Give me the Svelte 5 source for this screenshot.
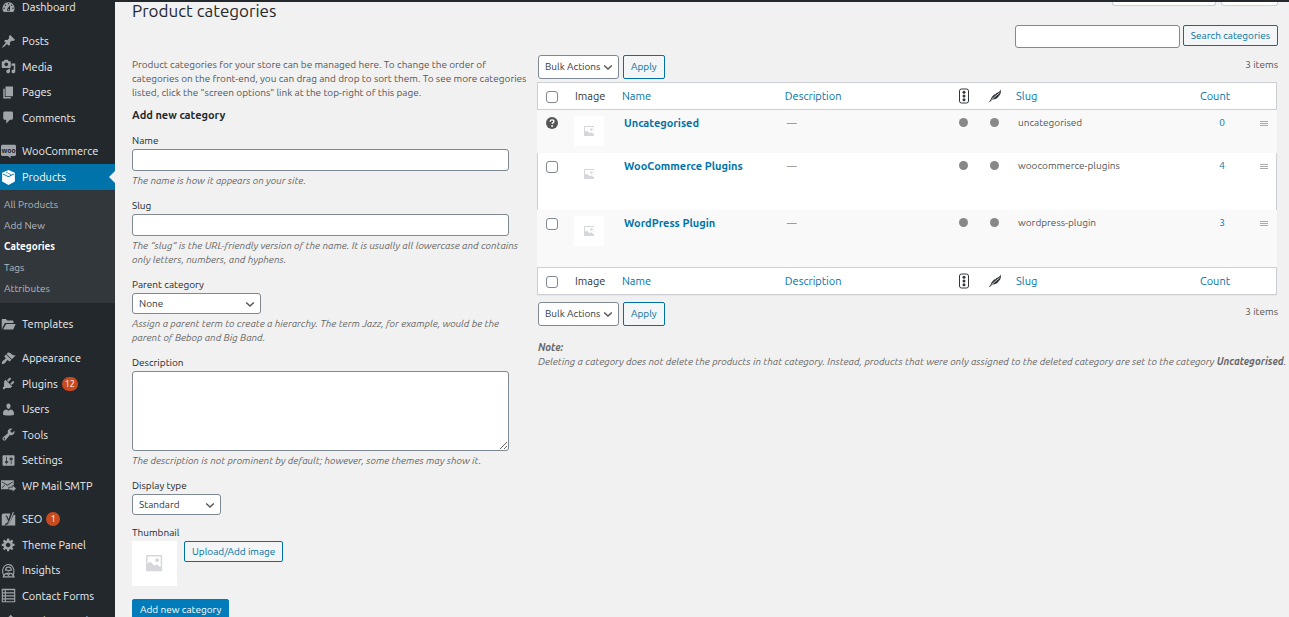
<script>
  const icons = {
    dashboard: 'M3.76 16h12.48A7.998 7.998 0 0 0 10 3a7.998 7.998 0 0 0-6.24 13zM10 4c.55 0 1 .45 1 1s-.45 1-1 1-1-.45-1-1 .45-1 1-1zM6 6c.55 0 1 .45 1 1s-.45 1-1 1-1-.45-1-1 .45-1 1-1zm8 0c.55 0 1 .45 1 1s-.45 1-1 1-1-.45-1-1 .45-1 1-1zm-5.37 5.55L12 7v6c0 1.1-.9 2-2 2s-2-.9-2-2c0-.57.24-1.08.63-1.45zM4 10c.55 0 1 .45 1 1s-.45 1-1 1-1-.45-1-1 .45-1 1-1zm12 0c.55 0 1 .45 1 1s-.45 1-1 1-1-.45-1-1 .45-1 1-1zm-5 3c0-.55-.45-1-1-1s-1 .45-1 1 .45 1 1 1 1-.45 1-1z',
    pin: 'M10.44 3.02l1.82-1.82 6.36 6.35-1.83 1.82c-1.05-.68-2.48-.57-3.41.36l-.75.75c-.92.93-1.04 2.35-.35 3.41l-1.83 1.82-2.41-2.41-2.8 2.79c-.42.42-3.38 2.71-3.8 2.29s1.86-3.39 2.28-3.81l2.79-2.79L4.1 9.36l1.83-1.82c1.05.69 2.48.57 3.4-.36l.75-.75c.93-.92 1.05-2.35.36-3.41z',
    media: 'M13 11V4c0-.55-.45-1-1-1h-1.67L9 1H5L3.67 3H2c-.55 0-1 .45-1 1v7c0 .55.45 1 1 1h10c.55 0 1-.45 1-1zM7 4.5c1.38 0 2.5 1.12 2.5 2.5S8.38 9.5 7 9.5 4.5 8.38 4.5 7 5.62 4.5 7 4.5zM14 6h5v10.5c0 1.38-1.12 2.5-2.5 2.5S14 17.88 14 16.5s1.12-2.5 2.5-2.5c.17 0 .34.02.5.05V9h-3V6zm-4 8.05V13h2v3.5c0 1.38-1.12 2.5-2.5 2.5S7 17.88 7 16.5 8.12 14 9.5 14c.17 0 .34.02.5.05z',
    page: 'M6 15V2h10v13H6zm-1 1h8v2H3V5h2v11z',
    comment: 'M5 2h9c1.1 0 2 .9 2 2v7c0 1.1-.9 2-2 2h-2l-5 5v-5H5c-1.1 0-2-.9-2-2V4c0-1.1.9-2 2-2z',
    box: 'M10 0l8.5 3.8v11.4L10 20l-8.500-4.800V3.800zM2.300 5.600l7.700 4 7.700-4-.5-.9-3 1.500-7-3.600-1 .5 6.900 3.600-3.200 1.600-7.200-3.500z',
    folder: 'M1 16.500V4c0-.8.6-1.500 1.400-1.500h4.200l1.800 2.200h7.200c.6 0 1 .4 1 1V8H6.200c-.8 0-1.400.4-1.700 1.100zM6.700 9.200H19.500l-2.700 6.600c-.2.4-.6.7-1 .7H2.800z',
    brush: 'M14.48 11.06L7.41 3.99l1.5-1.5c.5-.56 2.3-.47 3.51.32 1.21.8 1.43 1.28 2.91 2.1 1.18.64 2.45 1.26 4.45.85zm-.71.71L6.7 4.7 4.93 6.47c-.39.39-.39 1.02 0 1.41l1.06 1.06c.39.39.39 1.03 0 1.42-.6.6-1.43 1.11-2.21 1.69-.35.26-.7.53-1.01.84C1.43 14.23.4 16.08 1.4 17.07c.99 1 2.84-.03 4.18-1.36.31-.31.58-.66.85-1.02.57-.78 1.08-1.61 1.69-2.21.39-.39 1.02-.39 1.41 0l1.06 1.06c.39.39 1.02.39 1.41 0z',
    plug: 'M13.11 4.36L9.87 7.6 8 5.73l3.24-3.24c.35-.34 1.05-.2 1.56.32.52.51.66 1.21.31 1.55zm-8 1.77l.91-1.12 9.01 9.01-1.19.84c-.71.71-2.63 1.16-3.82 1.16H6.14L4.9 17.26c-.59.59-1.54.59-2.12 0-.59-.58-.59-1.53 0-2.12l1.24-1.24v-3.88c0-1.13.4-3.19 1.09-3.89zm7.26 3.97l3.24-3.24c.34-.35 1.04-.21 1.55.31.52.51.66 1.21.31 1.55l-3.24 3.25z',
    user: 'M10 9.25c-2.27 0-2.73-3.44-2.73-3.44C7 4.02 7.82 2 9.97 2c2.16 0 2.98 2.02 2.71 3.81 0 0-.41 3.44-2.68 3.44zm0 2.57L12.72 10c2.39 0 4.52 2.33 4.52 4.53v2.49s-3.65 1.13-7.24 1.13c-3.65 0-7.24-1.13-7.24-1.13v-2.49c0-2.25 1.94-4.48 4.47-4.48z',
    wrench: 'M16.68 9.77c-1.34 1.34-3.3 1.67-4.95.99l-5.41 6.52c-.99.99-2.59.99-3.58 0s-.99-2.59 0-3.57l6.52-5.42c-.68-1.65-.35-3.61.99-4.95 1.28-1.28 3.12-1.62 4.72-1.06l-2.89 2.89 2.82 2.82 2.86-2.87c.53 1.58.18 3.39-1.08 4.65zM3.81 16.21c.4.39 1.04.39 1.43 0 .4-.4.4-1.04 0-1.43-.39-.4-1.03-.4-1.43 0-.39.39-.39 1.03 0 1.43z',
    sliders: 'M18 16V4c0-.55-.45-1-1-1H3c-.55 0-1 .45-1 1v12c0 .55.45 1 1 1h14c.55 0 1-.45 1-1zM8 11h1c.55 0 1 .45 1 1s-.45 1-1 1H8v1.5c0 .28-.22.5-.5.5s-.5-.22-.5-.5V13H6c-.55 0-1-.45-1-1s.45-1 1-1h1V5.5c0-.28.22-.5.5-.5s.5.22.5.5V11zm5-2h-1c-.55 0-1-.45-1-1s.45-1 1-1h1V5.5c0-.28.22-.5.5-.5s.5.22.5.5V7h1c.55 0 1 .45 1 1s-.45 1-1 1h-1v5.5c0 .28-.22.5-.5.5s-.5-.22-.5-.5V9z',
    mail: 'M0 3h17v6.500h-2.500v2H10v3.500H0zM1.200 4.500v1l7.300 4.800 7.300-4.800v-1L8.500 9zM1.300 13.500l4-3.800-.6-.5-3.400 3.200zM11 12.500h4.500V10l4.500 4-4.500 4v-2.500H11z',
    gear: 'M18 12h-2.18c-.17.7-.44 1.35-.81 1.93l1.54 1.54-2.1 2.1-1.54-1.54c-.58.36-1.23.63-1.91.79V19H8v-2.18c-.68-.16-1.33-.43-1.91-.79l-1.54 1.54-2.12-2.12 1.54-1.54c-.36-.58-.63-1.23-.79-1.91H1V9.03h2.17c.16-.7.44-1.35.8-1.94L2.43 5.55l2.1-2.1 1.54 1.54c.58-.37 1.24-.64 1.93-.81V2h3v2.18c.68.16 1.33.43 1.91.79l1.54-1.54 2.12 2.12-1.54 1.54c.36.59.64 1.24.8 1.94H18V12zm-8.5 1.5c1.66 0 3-1.34 3-3s-1.34-3-3-3-3 1.34-3 3 1.34 3 3 3z',
    list: 'M1 1h18v18H1zM2.500 3v2.500H5V3zm4 0v2.500h11V3zm-4 4.200v2.300H5V7.200zm4 0v2.300h11V7.200zm-4 4v2.300H5v-2.300zm4 0v2.300h11v-2.300zm-4 4V17.500H5v-2.300zm4 0V17.500h11v-2.300z',
    feed: 'M13 1l4 4-2 3 2 4v6H2v-6l4-4z'
  };

  const groups = [
    [{ label: 'Dashboard', icon: 'dashboard' }],
    [
      { label: 'Posts', icon: 'pin' },
      { label: 'Media', icon: 'media' },
      { label: 'Pages', icon: 'page' },
      { label: 'Comments', icon: 'comment' }
    ],
    [
      { label: 'WooCommerce', icon: 'woo' },
      {
        label: 'Products',
        icon: 'box',
        current: true,
        sub: ['All Products', 'Add New', 'Categories', 'Tags', 'Attributes']
      }
    ],
    [{ label: 'Templates', icon: 'folder' }],
    [
      { label: 'Appearance', icon: 'brush' },
      { label: 'Plugins', icon: 'plug', count: 12 },
      { label: 'Users', icon: 'user' },
      { label: 'Tools', icon: 'wrench' },
      { label: 'Settings', icon: 'sliders' },
      { label: 'WP Mail SMTP', icon: 'mail' }
    ],
    [
      { label: 'SEO', icon: 'seo', count: 1 },
      { label: 'Theme Panel', icon: 'gear' },
      { label: 'Insights', icon: 'insights' },
      { label: 'Contact Forms', icon: 'list' },
      { label: 'Product Feed', icon: 'feed' }
    ]
  ];

  const rows = [
    { name: 'Uncategorised', slug: 'uncategorised', count: 0, fixed: true },
    { name: 'WooCommerce Plugins', slug: 'woocommerce-plugins', count: 4 },
    { name: 'WordPress Plugin', slug: 'wordpress-plugin', count: 3 }
  ];
</script>

{#snippet chevron()}
  <svg class="chevron" viewBox="0 0 10 10" aria-hidden="true"><path d="M1.200 3.400L5 7l3.800-3.600" /></svg>
{/snippet}

{#snippet placeholder()}
  <span class="placeholder">
    <svg viewBox="0 0 16 16" aria-hidden="true">
      <path fill="#d5d7db" fill-rule="evenodd" d="M1 0h14a1 1 0 0 1 1 1v14a1 1 0 0 1-1 1H1a1 1 0 0 1-1-1V1a1 1 0 0 1 1-1zm.5 1.500v7.200L4 6.500l4.500 4.200 2-1.500 4 3V1.500zM11 3.200a1.900 1.900 0 1 1 0 3.800 1.900 1.900 0 0 1 0-3.800z" />
    </svg>
  </span>
{/snippet}

{#snippet headings(pos)}
  <tr>
    <th class="cb"><input type="checkbox" aria-label="Select all, {pos}" /></th>
    <th class="image">Image</th>
    <th class="name"><a href="#name">Name</a></th>
    <th class="desc"><a href="#description">Description</a></th>
    <th class="mark">
      <svg viewBox="0 0 16 16" role="img" aria-label="SEO score">
        <rect x="3.500" y="1" width="9" height="14" rx="2" fill="none" stroke="#32373c" />
        <circle cx="8" cy="4.200" r="1.500" /><circle cx="8" cy="8" r="1.500" /><circle cx="8" cy="11.800" r="1.500" />
      </svg>
    </th>
    <th class="mark">
      <svg viewBox="0 0 16 16" role="img" aria-label="Readability score">
        <path d="M13.700 1.500c.5 2.600 0 4.600-1.200 6l-1 .4.4.3c-1.700 2.300-3.900 3.300-6.400 3.200L3 13.700l-1.300.5 2-2.600C4 9.300 6 7.100 8.200 5.900l.1.700 1.100-1.500C11.500 4.300 12.900 3.200 13.700 1.500z" />
        <path d="M4.500 11.600L12.500 4.800" stroke="#fff" stroke-width=".7" />
      </svg>
    </th>
    <th class="slug"><a href="#slug">Slug</a></th>
    <th class="num"><a href="#count">Count</a></th>
    <th class="handle"></th>
  </tr>
{/snippet}

{#snippet tablenav(pos)}
  <div class="tablenav">
    <span class="select">
      <select aria-label="Bulk actions, {pos}"><option>Bulk Actions</option></select>
      {@render chevron()}
    </span>
    <button type="button" class="button tall">Apply</button>
    <span class="items">3 items</span>
  </div>
{/snippet}

<div class="topbar"></div>
<div class="shell">
  <nav class="menu" aria-label="Main menu">
    {#each groups as group}
      <ul class="group">
        {#each group as item}
          <li>
            <a class="item" class:current={item.current} href="#{item.label}">
              <svg class="icon" viewBox="0 0 20 20" aria-hidden="true">
                {#if item.icon === 'woo'}
                  <path d="M2 1h16c1.100 0 2 .9 2 2v11c0 1.100-.9 2-2 2h-5.500l1 3-4.500-3H2c-1.100 0-2-.9-2-2V3c0-1.100.9-2 2-2z" />
                  <text x="10" y="11.500" text-anchor="middle">woo</text>
                {:else if item.icon === 'seo'}
                  <path d="M3.500 2h9L10 9.500 8.200 5H5.500l3.200 8.200c-.4 1.400-1.200 2-3 2.100v2.700H1V4.500C1 3.100 2.100 2 3.500 2zM17 3.500l2 .5V18H8.800c1.600-1 2.400-2.500 3-4z" />
                  <path d="M16.500 0L11 14.500c-.9 2.300-2 3.300-4 3.500M6 5.500l3.600 8" fill="none" stroke="currentColor" stroke-width="1.500" />
                {:else if item.icon === 'insights'}
                  <g fill="none" stroke="currentColor" stroke-width="1.500">
                    <path d="M4 17C1 13 1.500 6 5.500 3.500c3.500-2.500 8-1.500 10 1.500 2.500 3.500 2 9 0 12" />
                    <path d="M6.500 10.500c-1-3 .5-5 3.500-5s4.500 2 3.500 5M3 18.500c1-3.500 4-5 7-5s6.500 1.500 7.500 5zM7 9l3 1.500L13.500 9M8 14l2 2.500 2-2.500" />
                  </g>
                {:else}
                  <path fill-rule="evenodd" d={icons[item.icon]} />
                {/if}
              </svg>
              <span>{item.label}</span>
              {#if item.count}<span class="count">{item.count}</span>{/if}
            </a>
            {#if item.sub}
              <ul class="sub">
                {#each item.sub as label}
                  <li><a class:active={label === 'Categories'} href="#{label}">{label}</a></li>
                {/each}
              </ul>
            {/if}
          </li>
        {/each}
      </ul>
    {/each}
  </nav>

  <main>
    <div class="screen-tabs"><span class="tab wide"></span><span class="tab"></span></div>
    <h1>Product categories</h1>
    <form class="search">
      <input type="search" aria-label="Search categories" />
      <button type="button" class="button">Search categories</button>
    </form>

    <div class="columns">
      <section>
        <p class="intro">Product categories for your store can be managed here. To change the order of categories on the front-end, you can drag and drop to sort them. To see more categories listed, click the "screen options" link at the top-right of this page.</p>
        <h2>Add new category</h2>
        <form>
          <div class="field">
            <label for="name">Name</label>
            <input id="name" type="text" />
            <p class="help">The name is how it appears on your site.</p>
          </div>
          <div class="field">
            <label for="slug">Slug</label>
            <input id="slug" type="text" />
            <p class="help">The “slug” is the URL-friendly version of the name. It is usually all lowercase and contains only letters, numbers, and hyphens.</p>
          </div>
          <div class="field">
            <label for="parent">Parent category</label>
            <span class="select parent">
              <select id="parent"><option>None</option></select>
              {@render chevron()}
            </span>
            <p class="help">Assign a parent term to create a hierarchy. The term Jazz, for example, would be the parent of Bebop and Big Band.</p>
          </div>
          <div class="field">
            <label for="description">Description</label>
            <textarea id="description"></textarea>
            <p class="help">The description is not prominent by default; however, some themes may show it.</p>
          </div>
          <div class="field">
            <label for="display">Display type</label>
            <span class="select display">
              <select id="display"><option>Standard</option></select>
              {@render chevron()}
            </span>
          </div>
          <div class="field">
            <label for="upload">Thumbnail</label>
            <div class="thumb">
              {@render placeholder()}
              <button id="upload" type="button" class="button">Upload/Add image</button>
            </div>
          </div>
          <button type="button" class="button primary">Add new category</button>
        </form>
      </section>

      <section>
        {@render tablenav('top')}
        <table>
          <thead>{@render headings('top')}</thead>
          <tbody>
            {#each rows as row}
              <tr class:short={row.fixed}>
                <td class="cb">
                  {#if row.fixed}
                    <svg class="tip" viewBox="0 0 12 12" role="img" aria-label="Default category">
                      <circle cx="6" cy="6" r="6" fill="#555" />
                      <path d="M4.200 4.700C4.200 3.500 5 2.900 6 2.900s1.900.6 1.900 1.600c0 1.300-1.700 1.300-1.700 2.600" fill="none" stroke="#fff" stroke-width="1.400" />
                      <circle cx="6.100" cy="9" r=".9" fill="#fff" />
                    </svg>
                  {:else}
                    <input type="checkbox" aria-label="Select {row.name}" />
                  {/if}
                </td>
                <td class="image">{@render placeholder()}</td>
                <td class="name"><a href="#{row.slug}">{row.name}</a></td>
                <td class="desc">—</td>
                <td class="mark"><span class="dot"></span></td>
                <td class="mark"><span class="dot"></span></td>
                <td class="slug">{row.slug}</td>
                <td class="num"><a href="#{row.slug}-products">{row.count}</a></td>
                <td class="handle">
                  <svg viewBox="0 0 8 8" aria-hidden="true"><path d="M0 2.500h8M0 4.500h8M0 6.500h8" stroke="#aaa" /></svg>
                </td>
              </tr>
            {/each}
          </tbody>
          <tfoot>{@render headings('bottom')}</tfoot>
        </table>
        <div class="below">{@render tablenav('bottom')}</div>
        <p class="help note"><strong>Note:</strong><br />Deleting a category does not delete the products in that category. Instead, products that were only assigned to the deleted category are set to the category <strong>Uncategorised</strong>.</p>
      </section>
    </div>
  </main>
</div>

<style>
  :global(body) {
    background: #f1f1f1;
    overflow: hidden;
  }
  :global(#app) {
    height: 100vh;
    overflow: hidden;
    font: 10px/14px Ubuntu, "Noto Sans", sans-serif;
    color: #444;
  }
  *, *::before, *::after { box-sizing: border-box; }
  ul { list-style: none; margin: 0; padding: 0; }
  p, h1, h2 { margin: 0; }
  a { color: #0073aa; text-decoration: none; }
  input, select, textarea, button { font: inherit; margin: 0; }

  .topbar { height: 2px; background: #23282d; position: relative; z-index: 1; }
  .shell { display: grid; grid-template-columns: 115px 1fr; min-height: 100%; }

  .menu { background: #23282d; margin-top: -8px; font-size: 11px; }
  .group {
    display: grid;
    grid-auto-rows: minmax(26px, auto) minmax(25px, auto);
    margin-bottom: 8px;
  }
  .group > li { display: grid; }
  .item {
    position: relative;
    display: flex;
    align-items: center;
    padding-left: 1px;
    gap: 6px;
    color: #eee;
    white-space: nowrap;
  }
  .icon { width: 15px; height: 15px; fill: currentColor; color: #a0a5aa; flex: none; }
  .icon text { font: bold 9px "Noto Sans", sans-serif; fill: #23282d; }
  .current { height: 26px; background: #0073aa; color: #fff; }
  .current .icon { color: #fff; }
  .current::after {
    content: '';
    position: absolute;
    right: 0;
    top: 7px;
    border: 6px solid transparent;
    border-left-width: 0;
    border-right-color: #f1f1f1;
  }
  .count {
    min-width: 14px;
    height: 14px;
    margin-left: -2px;
    padding: 0 3px;
    border-radius: 7px;
    background: #ca4a1f;
    color: #fff;
    font-size: 9px;
    text-align: center;
  }
  .sub { background: #32373c; padding: 4px 0; font-size: 10px; }
  .sub a { display: block; padding-left: 4px; line-height: 21px; color: #b4b9be; }
  .sub .active { color: #fff; font-weight: 600; }

  main { padding: 0 11px 0 17px; }
  .screen-tabs { display: flex; justify-content: flex-end; gap: 5px; height: 4px; margin-bottom: -4px; }
  .tab { width: 57px; background: #fff; border: 1px solid #ccd0d4; border-top: 0; border-radius: 0 0 3px 3px; }
  .tab.wide { width: 104px; }
  h1 { font-size: 17px; font-weight: 400; line-height: 18px; color: #23282d; }
  h2 { font-size: 11px; font-weight: 700; line-height: 16px; color: #23282d; margin: 7px 0 11px; }
  .search { display: flex; justify-content: flex-end; align-items: flex-start; gap: 3px; margin: 5px 0 7px; }
  .search input { width: 165px; }
  .columns { display: grid; grid-template-columns: 389fr 741fr; gap: 16px; }
  .intro { color: #555; padding-top: 3px; margin-right: -12px; }

  input[type='text'], input[type='search'], textarea, select {
    border: 1px solid #7e8993;
    border-radius: 3px;
    background: #fff;
    color: #32373c;
    padding: 0 6px;
  }
  input[type='text'] { height: 22px; }
  input[type='search'] { height: 23px; }
  .field { display: grid; justify-items: start; gap: 1px; margin-bottom: 11px; }
  .field label { color: #23282d; }
  .field > input, .field > textarea { width: 97%; }
  textarea { height: 80px; resize: vertical; display: block; }
  .help { font-style: italic; color: #666; padding-top: 2px; }

  .select { display: inline-grid; align-items: center; height: 21px; }
  .select > :global(*) { grid-area: 1 / 1; }
  .select select { appearance: none; width: 100%; height: 100%; }
  .parent { width: 129px; }
  .display { width: 89px; }
  .chevron {
    width: 10px; height: 10px;
    justify-self: end;
    margin-right: 6px;
    fill: none; stroke: #555; stroke-width: 1.400;
    pointer-events: none;
  }

  .button {
    height: 21px;
    padding: 0 7px;
    border: 1px solid #0071a1;
    border-radius: 2px;
    background: #f3f5f6;
    color: #0071a1;
    white-space: nowrap;
  }
  .button.tall { height: 24px; }
  .primary { background: #007cba; border-color: #007cba; color: #fff; margin-top: 2px; }
  .thumb { display: flex; align-items: flex-start; gap: 7px; }
  .placeholder { display: grid; place-items: center; width: 45px; height: 45px; background: #fff; }
  .placeholder svg { width: 36%; height: 36%; }

  .tablenav { display: flex; gap: 4px; height: 24px; margin: 0 0 3px 1px; }
  .tablenav .select { width: 81px; height: 24px; }
  .items { margin-left: auto; line-height: 20px; color: #555; }
  .below { margin-top: 7px; }

  table { width: calc(100% - 1px); table-layout: fixed; border-spacing: 0; box-shadow: 0 1px 1px rgba(0, 0, 0, 0.04); }
  th {
    height: 28px;
    padding: 6px 6px 0;
    border: solid #ccd0d4;
    border-width: 1px 0;
    background: #fff;
    color: #32373c;
    font-size: 11px;
    font-weight: 400;
    line-height: 14px;
    text-align: left;
    vertical-align: top;
  }
  td { height: 57px; padding: 6px 8px 0; vertical-align: top; background: #f9f9f9; color: #555; }
  .short td { height: 43px; }
  tbody tr:nth-child(even) td { background: #fff; }
  th:first-child, tbody tr:nth-child(even) td:first-child { border-left: 1px solid #ccd0d4; }
  th:last-child, tbody tr:nth-child(even) td:last-child { border-right: 1px solid #ccd0d4; }
  .cb { width: 30px; padding-left: 8px; padding-right: 0; }
  td.cb { padding-left: 9px; }
  tbody tr:nth-child(even) td.cb { padding-left: 8px; }
  .cb input {
    appearance: none;
    display: block;
    width: 12px; height: 12px;
    margin-top: 2px;
    border: 1px solid #7e8993;
    border-radius: 3px;
    background: #fff;
  }
  .tip { display: block; width: 12px; height: 12px; margin-top: 1px; }
  .image { width: 49px; }
  th.image { padding-left: 8px; padding-right: 0; }
  td.image { padding-left: 7px; }
  .image .placeholder { width: 30px; height: 30px; }
  .name { width: 22%; }
  td.name { font-size: 11px; font-weight: 700; padding-right: 0; }
  .mark { width: 31px; padding-left: 0; padding-right: 0; text-align: center; }
  .mark svg { width: 16px; height: 16px; fill: #32373c; display: block; margin: -1px auto 0; }
  .dot { display: block; width: 9px; height: 9px; margin: 2px auto 0; border-radius: 50%; background: #888; }
  .slug { width: 20%; }
  .num { width: 83px; text-align: right; }
  th.num { padding-right: 11px; }
  td.num { padding-right: 16px; }
  .handle { width: 36px; }
  td.handle { padding-left: 19px; }
  .handle svg { width: 8px; height: 8px; display: block; margin-top: 3px; }
  .note { margin: 13px -11px 0 1px; }
</style>
